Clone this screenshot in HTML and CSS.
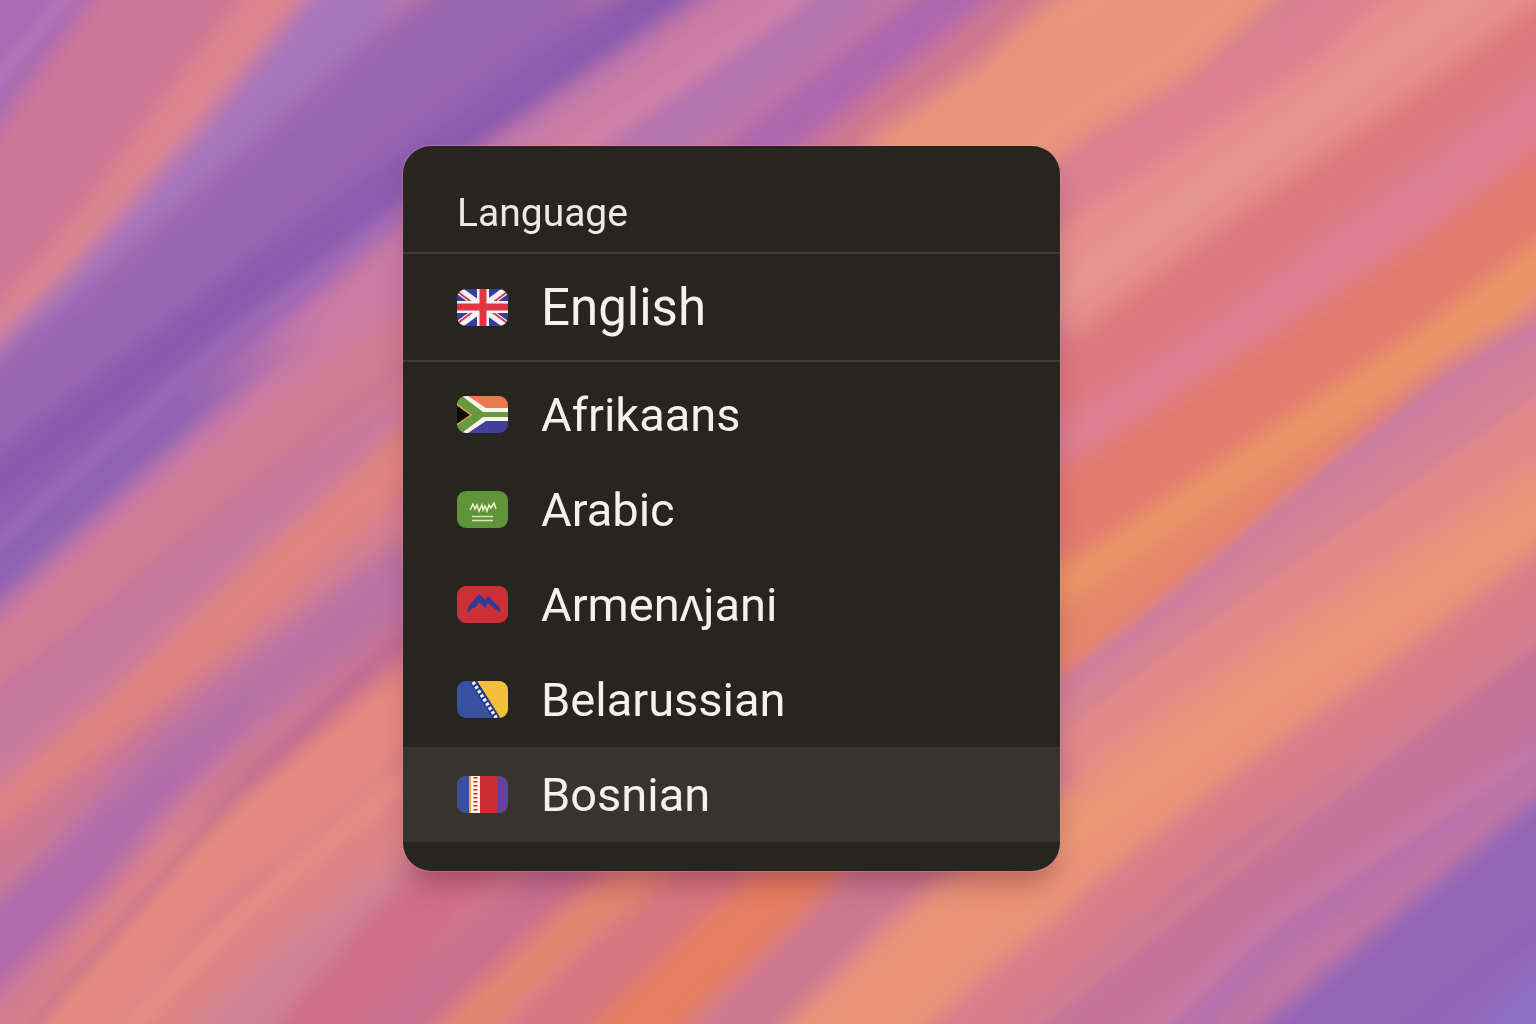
FILE: index.html
```html
<!DOCTYPE html>
<html lang="en">
<head>
<meta charset="utf-8">
<meta name="viewport" content="width=device-width, initial-scale=1">
<title>Language</title>
<link rel="stylesheet" href="styles.css">
</head>
<body>

<svg class="wallpaper" viewBox="0 0 1536 1024" preserveAspectRatio="xMidYMid slice" aria-hidden="true">
  <defs>
    <filter id="soft" x="-10%" y="-10%" width="120%" height="120%"><feGaussianBlur stdDeviation="11"/></filter>
    <filter id="fine" x="-10%" y="-10%" width="120%" height="120%"><feGaussianBlur stdDeviation="6"/></filter>
  </defs>
  <rect width="1536" height="1024" fill="#d47e92"/>

  <!-- wide bands, top left to bottom right -->
  <g filter="url(#soft)" fill="none">
    <path d="M120-60L-60 120" stroke="#a96cb2" stroke-width="110"/>
    <path d="M210-60L100 90L-60 310" stroke="#cd7698" stroke-width="120"/>
    <path d="M310-60L270 0L180 115L100 225L-60 410" stroke="#de868c" stroke-width="46"/>
    <path d="M400-60L330 30L230 150L100 295L-60 450" stroke="#a976bc" stroke-width="76"/>
    <path d="M570-60L470 30L300 180L150 310L-60 480" stroke="#9b66b0" stroke-width="120"/>
    <path d="M720-50L630 15L407 165L245 298L122 392L-60 535" stroke="#895aae" stroke-width="56"/>
    <path d="M700-50L540 35L380 150L250 270L480 110Z" fill="#935fae"/>
    <path d="M420 215L250 345L122 450L-60 590" stroke="#9664b4" stroke-width="56"/>
    <path d="M860-60L700 45L560 140L380 290L240 410L-60 650" stroke="#cb7ca4" stroke-width="76"/>
    <path d="M320 320L100 460L-60 570V660L60 550Z" fill="#8e62b2"/>
    <path d="M410 345L250 460L120 565L-60 715" stroke="#d27c92" stroke-width="66"/>
    <path d="M410 425L245 540L122 635L-60 780" stroke="#c67a9f" stroke-width="66"/>
    <path d="M430 430L370 490L294 555L196 645L122 719L-60 880" stroke="#e0857f" stroke-width="50"/>
    <path d="M290 600L100 750L-60 870V930L90 800Z" fill="#cf7893"/>
    <path d="M420 565L245 700L147 784L73 867L-60 990" stroke="#b873a4" stroke-width="64"/>
    <path d="M260 690L60 850L-60 950V1050L110 880Z" fill="#ae6cac"/>
    <path d="M420 630L270 765L150 885L20 1030" stroke="#c9708e" stroke-width="34"/>
    <path d="M430 690L294 800L196 872L122 955L30 1070" stroke="#e48a80" stroke-width="76"/>
    <path d="M430 790L294 905L170 1010L130 1060" stroke="#dc8588" stroke-width="70"/>
    <path d="M420 880L294 970L200 1060" stroke="#cf8296" stroke-width="54"/>
    <path d="M490 840L400 930L290 1060" stroke="#cf6e88" stroke-width="66"/>
    <path d="M590 850L500 935L360 1060" stroke="#c97090" stroke-width="60"/>
    <path d="M660 860L580 920L430 1060" stroke="#e3866f" stroke-width="44"/>
    <path d="M740 860L650 940L530 1060" stroke="#d67680" stroke-width="70"/>
    <path d="M830 850L740 930L600 1060" stroke="#e77f62" stroke-width="66"/>
    <path d="M930 840L850 910L710 1060" stroke="#cb7892" stroke-width="56"/>
    <path d="M1600 470L1454 570L1307 692L1110 815L960 930L810 1070" stroke="#e99477" stroke-width="100"/>
    <path d="M1600 385L1405 525L1282 605L1062 755" stroke="#e2898a" stroke-width="90"/>
    <path d="M1600 450L1500 520L1300 650L1100 790" stroke="#e8947a" stroke-width="50"/>
    <path d="M1600 310L1454 415L1300 515L1160 612L1040 700" stroke="#d2819a" stroke-width="50"/>
    <path d="M1480 330L1250 450L1040 580V700L1280 510Z" fill="#e6866a"/>
    <path d="M1600 225L1500 300L1356 385L1184 493L1040 590" stroke="#ea9568" stroke-width="52"/>
    <path d="M1600 140L1400 290L1258 385L1040 530" stroke="#e37a70" stroke-width="86"/>
    <path d="M1600 65L1420 205L1258 310L1040 450" stroke="#dd8094" stroke-width="52"/>
    <path d="M1600-15L1380 150L1209 280L1040 395" stroke="#de787e" stroke-width="70"/>
    <path d="M1540-60L1405 40L1209 175L1040 300" stroke="#e5908d" stroke-width="96"/>
    <path d="M1410-60L1300 40L1184 115L1040 210" stroke="#dc8092" stroke-width="50"/>
    <path d="M1240-60L1150 20L1050 80L900 190" stroke="#e8957c" stroke-width="136"/>
    <path d="M1060-40L960 50L800 160" stroke="#cf7790" stroke-width="44"/>
    <path d="M1010-50L870 60L730 170" stroke="#ac67ae" stroke-width="52"/>
    <path d="M900-50L790 45L620 170" stroke="#b676b0" stroke-width="60"/>
    <path d="M1600 560L1400 710L1258 812L1120 920L980 1060" stroke="#d87e8b" stroke-width="90"/>
    <path d="M1600 640L1400 785L1258 880L1030 1070" stroke="#c5749c" stroke-width="84"/>
    <path d="M1600 730L1450 845L1290 950L1160 1070" stroke="#b572ac" stroke-width="64"/>
    <path d="M1600 740L1440 870L1300 970L1210 1060" stroke="#c678a0" stroke-width="30"/>
    <path d="M1620 850L1280 1130" stroke="#9466b6" stroke-width="190"/>
    <path d="M1590 950L1470 1070" stroke="#8c70c2" stroke-width="60"/>
  </g>

  <!-- thin streaks -->
  <g filter="url(#fine)" fill="none" stroke-width="9" opacity=".5">
    <path d="M80-20L-20 100" stroke="#c088c0"/>
    <path d="M410 205L220 345L-20 560" stroke="#b27abc" stroke-width="7"/>
    <path d="M660 40L420 200" stroke="#b07ab8"/>
    <path d="M820-20L560 160" stroke="#d886aa" stroke-width="22"/>
    <path d="M1490-20L1380 60L1040 310" stroke="#e89c90" stroke-width="22"/>
    <path d="M1600 290L1440 390L1290 505L1170 605L1040 705" stroke="#c47ab0" stroke-width="16"/>
    <path d="M1560 640L1330 790L1070 1040" stroke="#c86f90" stroke-width="12"/>
    <path d="M1560 620L1230 870L1000 1050" stroke="#e08686" stroke-width="12"/>
    <path d="M1560 735L1270 920L1130 1050" stroke="#cf7ea6" stroke-width="14"/>
    <path d="M1560 370L1440 455L1200 620L1040 740" stroke="#cc8098" stroke-width="12"/>
    <path d="M1560 500L1270 690L1040 860" stroke="#ec9c74" stroke-width="20"/>
    <path d="M410 360L200 530L100 615L-20 710" stroke="#b872a0" stroke-width="8"/>
    <path d="M430 760L240 915L110 1050" stroke="#ea967e" stroke-width="20"/>
    <path d="M430 610L230 800L10 1050" stroke="#b0689c" stroke-width="12"/>
    <path d="M1560 910L1380 1050" stroke="#8860b4" stroke-width="12"/>
  </g>
</svg>

<main class="desktop">
  <section class="menu" aria-labelledby="menu-title">
    <h1 class="menu-title" id="menu-title">Language</h1>

    <div class="current">
      <button class="lang" type="button">
        <svg class="flag" viewBox="0 0 51 37" aria-hidden="true">
          <rect width="51" height="37" fill="#36409a"/>
          <path d="M0 0L51 37M51 0L0 37" stroke="#f6f1f2" stroke-width="8"/>
          <path d="M1 3L17 15M1 34L17 22M50 3L34 15M50 34L34 22" stroke="#d63a4c" stroke-width="2"/>
          <path d="M26 0V37M0 18H51" stroke="#f6f1f2" stroke-width="12"/>
          <path d="M26 0V37M0 18H51" stroke="#e03545" stroke-width="7"/>
        </svg>
        English
      </button>
    </div>

    <ul class="list">
      <li>
        <button class="lang" type="button">
          <svg class="flag" viewBox="0 0 51 37" aria-hidden="true">
            <rect width="51" height="19" fill="#e87a4c"/>
            <rect y="19" width="51" height="18" fill="#453f9c"/>
            <path d="M5 0H11L29 12H51V25H29L11 37H5Z" fill="#f7f4ee"/>
            <path d="M0 0H5L26 16H51V21H26L5 37H0Z" fill="#679a3c"/>
            <path d="M-2 7L14 19L-2 30Z" fill="#0a0806" stroke="#e9a23c" stroke-width="1.500"/>
          </svg>
          Afrikaans
        </button>
      </li>
      <li>
        <button class="lang" type="button">
          <svg class="flag" viewBox="0 0 51 37" aria-hidden="true">
            <rect width="51" height="37" fill="#5f9439"/>
            <path d="M13 19L16 13L18 18L20 14L22 20L25 14L26 19L28 15L30 20L32 14L34 17L37 12L39 18" fill="none" stroke="#eef3cf" stroke-width="1.500"/>
            <path d="M15 25.500H36M15 29.500H36" stroke="#d9e8b4" stroke-width="1.300"/>
          </svg>
          Arabic
        </button>
      </li>
      <li>
        <button class="lang" type="button">
          <svg class="flag" viewBox="0 0 51 37" aria-hidden="true">
            <rect width="51" height="37" fill="#cb3038"/>
            <path d="M11 21L22 8L28 14L31 10L43 22V26L34 20L31 17L28 22L22 16L18 22L15 22L11 27Z" fill="#2c3a98"/>
          </svg>
          Armenʌjani
        </button>
      </li>
      <li>
        <button class="lang" type="button">
          <svg class="flag" viewBox="0 0 51 37" aria-hidden="true">
            <rect width="51" height="37" fill="#3752a0"/>
            <path d="M20 0H51V37H43Z" fill="#f3c03a"/>
            <path d="M16 0L40 38" stroke="#263a8c" stroke-width="7"/>
            <path d="M16 1L40 38" stroke="#f2f2f4" stroke-width="3.500" stroke-dasharray="3 2"/>
          </svg>
          Belarussian
        </button>
      </li>
      <li>
        <button class="lang active" type="button">
          <svg class="flag" viewBox="0 0 51 37" aria-hidden="true">
            <rect width="51" height="37" fill="#cb2f35"/>
            <rect width="13" height="37" fill="#37509c"/>
            <rect x="12" width="3" height="37" fill="#e8a548"/>
            <rect x="14" width="9" height="37" fill="#f6efe6"/>
            <path d="M18.500 1V37" stroke="#b63436" stroke-width="4" stroke-dasharray="1.500 2.500"/>
            <rect x="40" width="11" height="37" fill="#6440a0"/>
          </svg>
          Bosnian
        </button>
      </li>
    </ul>
  </section>
</main>

</body>
</html>
```
FILE: styles.css
```css
* {
    box-sizing: border-box;
}

body {
    margin: 0;
    font-family: Roboto, "Liberation Sans", sans-serif;
    color: #f4f2ee;
}

.wallpaper {
    position: fixed;
    inset: 0;
    width: 100%;
    height: 100%;
    z-index: -1;
}

.desktop {
    min-height: 100vh;
    display: flex;
    align-items: center;
    justify-content: center;
    padding: 0 73px 7px 0;
}

.menu {
    width: 657px;
    max-width: 100%;
    padding-bottom: 29px;
    background: #262520;
    border-radius: 28px;
    box-shadow: 0 0 1px 1px rgba(240, 160, 170, 0.3), 0 18px 28px -8px rgba(90, 20, 50, 0.4);
    overflow: hidden;
}

.menu-title {
    margin: 0;
    padding: 42px 54px 14px;
    font-size: 39px;
    font-weight: 400;
    line-height: 50px;
    color: #eceae6;
}

.current {
    border: solid #3d3c37;
    border-width: 2px 0;
}

.list {
    list-style: none;
    margin: 0;
    padding: 5px 0 0;
}

.lang {
    display: flex;
    align-items: center;
    gap: 33px;
    width: 100%;
    height: 95px;
    padding: 0 54px;
    border: 0;
    background: none;
    font: inherit;
    font-size: 47px;
    color: inherit;
    text-align: left;
    cursor: pointer;
}

.current .lang {
    height: 106px;
    font-size: 51px;
}

.lang:hover,
.lang.active {
    background: #36342e;
}

.flag {
    flex: none;
    width: 51px;
    height: 37px;
    border-radius: 9px;
}
```
